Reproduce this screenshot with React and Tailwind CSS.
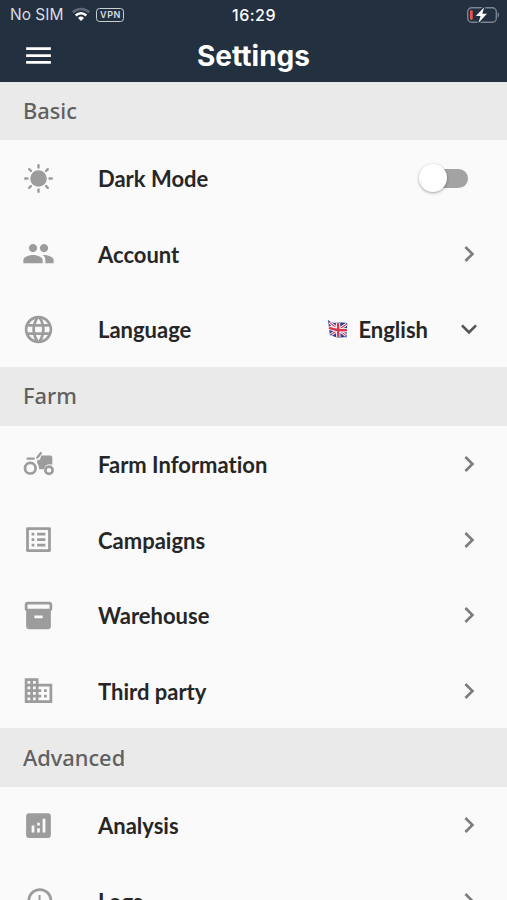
import {
  MdAnalytics,
  MdBusiness,
  MdChevronRight,
  MdExpandMore,
  MdHistory,
  MdInventory2,
  MdLanguage,
  MdListAlt,
  MdMenu,
  MdPeople,
} from 'react-icons/md';

function SunIcon({ className }) {
  return (
    <svg viewBox="0 0 33 33" className={className} fill="none" stroke="currentColor" strokeWidth="2.4" strokeLinecap="round">
      <circle cx="16.5" cy="16.5" r="8.3" fill="currentColor" stroke="none" />
      <path d="M16.5 3.2v2.3M16.5 27.5v2.3M3.2 16.5h2.3M27.5 16.5h2.3M7.2 7.2l1.7 1.7M24.1 24.1l1.7 1.7M25.8 7.2l-1.7 1.7M8.9 24.1l-1.7 1.7" />
    </svg>
  );
}

function TractorIcon({ className }) {
  return (
    <svg viewBox="0 0 33 33" className={className} fill="none" stroke="currentColor">
      <circle cx="8.3" cy="20.2" r="5.3" strokeWidth="2.7" />
      <circle cx="27" cy="22.2" r="3.6" strokeWidth="2.7" />
      <path d="M5.5 10.7h6.3M15.2 9.7l3.7-4.7" strokeWidth="2.2" strokeLinecap="round" />
      <path d="M19.2 7.5H29l1.3 1.3v8c-3.8-1.7-7.6.2-8.3 4.5h-5c.3-2.3-.4-4.5-1.8-6v-3l2.8-.7z" fill="currentColor" stroke="none" />
    </svg>
  );
}

function WifiIcon() {
  return (
    <svg viewBox="0 0 20 15" className="w-5 h-[15px]" fill="none" strokeWidth="2.5">
      <path d="M1.8 5.4a11.6 11.6 0 0 1 16.4 0" stroke="#5f6975" />
      <path d="M4.7 8.5a7.5 7.5 0 0 1 10.6 0" stroke="#fff" />
      <path d="M7 11a4.3 4.3 0 0 1 6 0L10 14z" fill="#fff" />
    </svg>
  );
}

function BatteryIcon() {
  return (
    <svg viewBox="0 0 34 18" className="w-[34px] h-[18px]" fill="none">
      <rect x="1.7" y="1.7" width="28.6" height="14.6" rx="4" stroke="#7b8490" strokeWidth="1.4" />
      <path d="M31.7 6.3v5.4c1.8-.7 1.8-4.7 0-5.4z" fill="#7b8490" />
      <rect x="4" y="4.2" width="2.7" height="9.6" rx="1" fill="#f1504b" />
      <path d="M18.2 1.2L9.8 10h4.8l-2.2 7L21 7.8h-4.7z" fill="#fff" stroke="#233040" strokeWidth="2.4" paintOrder="stroke" />
    </svg>
  );
}

function FlagIcon() {
  return (
    <svg viewBox="0 0 21 20" className="w-5 h-[19px]">
      <path d="M0 0c3 1.8 4 3 7.5 3s6-.8 12.8.3L19.5 18.5c-4-.8-6 .2-9 0s-4-1.5-8.5-2.5z" fill="#30418f" />
      <path d="M1.5 2.5l17.5 14M19.5 4.5l-16.5 11" stroke="#fff" strokeWidth="3" />
      <path d="M1.5 2.5l17.5 14M19.5 4.5l-16.5 11" stroke="#d8354b" strokeWidth="1.2" />
      <path d="M10.5 3.2l.4 15M1 8.2c6 2.2 10 3.2 18.9 2.5" stroke="#fff" strokeWidth="4.5" fill="none" />
      <path d="M10.5 3.2l.4 15M1 8.2c6 2.2 10 3.2 18.9 2.5" stroke="#d8354b" strokeWidth="2.5" fill="none" />
    </svg>
  );
}

function Toggle() {
  return (
    <div className="relative w-[49px] h-7 mr-[39px] flex items-center justify-end">
      <div className="w-10 h-[19px] rounded-full bg-[#a3a3a3]" />
      <div className="absolute left-0 top-0 size-7 rounded-full bg-white shadow-[0_1px_3px_rgba(0,0,0,0.35)]" />
    </div>
  );
}

const sections = [
  {
    title: 'Basic',
    band: 'h-[58px]',
    rows: [
      { label: 'Dark Mode', icon: SunIcon, type: 'toggle' },
      { label: 'Account', icon: MdPeople },
      { label: 'Language', icon: MdLanguage, type: 'select' },
    ],
  },
  {
    title: 'Farm',
    band: 'h-[59.5px]',
    rows: [
      { label: 'Farm Information', icon: TractorIcon },
      { label: 'Campaigns', icon: MdListAlt },
      { label: 'Warehouse', icon: MdInventory2 },
      { label: 'Third party', icon: MdBusiness },
    ],
  },
  {
    title: 'Advanced',
    band: 'h-[59px]',
    rows: [
      { label: 'Analysis', icon: MdAnalytics },
      { label: 'Logs', icon: MdHistory },
    ],
  },
];

function Row({ label, icon: Icon, type }) {
  return (
    <div className="h-[75.5px] flex items-center pl-[22px] pt-px">
      <Icon className="size-[33px] shrink-0 text-[#9c9c9c]" />
      <span className="ml-[43px] flex-1 pt-px text-[22px] font-bold text-[#262626]">{label}</span>
      {type === 'toggle' && <Toggle />}
      {type === 'select' && (
        <div className="flex items-center">
          <FlagIcon />
          <span className="ml-[10px] pt-px text-[22px] font-bold text-[#262626]">English</span>
          <MdExpandMore className="size-8 ml-[25px] mr-[22px] text-[#555]" />
        </div>
      )}
      {!type && <MdChevronRight className="size-8 mr-[22px] text-[#7d7d7d]" />}
    </div>
  );
}

export default function App() {
  return (
    <div className="h-[900px] w-[507px] overflow-hidden bg-[#fafafa] font-['Lato',sans-serif] [font-variant-ligatures:none]">
      {/* Status bar + title */}
      <header className="h-[82px] bg-[#233040] text-white font-['Inter',sans-serif]">
        <div className="h-[29px] grid grid-cols-3 items-center pl-[10px] pr-[7px]">
          <div className="flex items-center">
            <span className="text-[15.5px] text-[#d9dde1] whitespace-nowrap">No SIM</span>
            <span className="ml-[8px]"><WifiIcon /></span>
            <span className="ml-[5px] w-7 h-[14px] rounded-[3.5px] border-[1.5px] border-[#c9ced3] flex items-center justify-center text-[9px] font-semibold text-[#d9dde1] tracking-[0.5px]">VPN</span>
          </div>
          <div className="text-center text-base font-medium tracking-[0.5px] pr-[2px]">16:29</div>
          <div className="flex justify-end"><BatteryIcon /></div>
        </div>
        <div className="h-[53px] grid grid-cols-[60px_1fr_60px] items-center">
          <MdMenu className="size-[33px] ml-[22px]" />
          <h1 className="text-center text-[28px] font-bold">Settings</h1>
        </div>
      </header>

      {sections.map(s => (
        <section key={s.title}>
          <div className={`${s.band} bg-[#eaeaea] flex items-center pl-[23px] pt-px font-['Noto_Sans',sans-serif] text-[21.8px] font-medium text-[#606060]`}>
            {s.title}
          </div>
          {s.rows.map(r => <Row key={r.label} {...r} />)}
        </section>
      ))}
    </div>
  );
}
